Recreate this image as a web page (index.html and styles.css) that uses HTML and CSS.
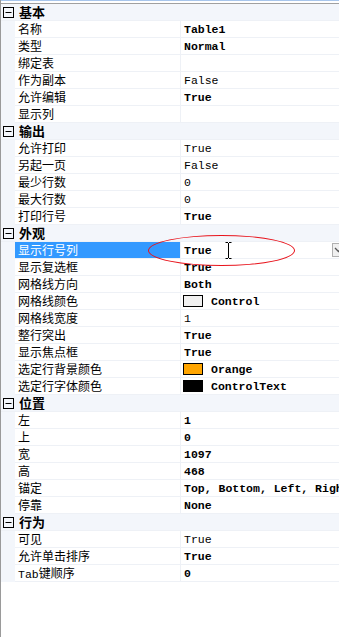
FILE: index.html
```html
<!DOCTYPE html>
<html>
<head>
<meta charset="utf-8">
<link rel="stylesheet" href="styles.css">
</head>
<body>
<div class="frame">
  <div class="topbar"></div>
  <div class="grid">
    <div class="cat"><span class="tog"><svg width="11" height="11" viewBox="0 0 11 11"><rect x="0.5" y="0.5" width="10" height="10" fill="none" stroke="#000"/><path d="M2.5 5.5h6" stroke="#000"/></svg></span><span class="cat-t">基本</span></div>
    <div class="row"><span class="gut"></span><span class="name">名称</span><span class="val b">Table1</span></div>
    <div class="row"><span class="gut"></span><span class="name">类型</span><span class="val b">Normal</span></div>
    <div class="row"><span class="gut"></span><span class="name">绑定表</span><span class="val"></span></div>
    <div class="row"><span class="gut"></span><span class="name">作为副本</span><span class="val">False</span></div>
    <div class="row"><span class="gut"></span><span class="name">允许编辑</span><span class="val b">True</span></div>
    <div class="row"><span class="gut"></span><span class="name">显示列</span><span class="val"></span></div>

    <div class="cat"><span class="tog"><svg width="11" height="11" viewBox="0 0 11 11"><rect x="0.5" y="0.5" width="10" height="10" fill="none" stroke="#000"/><path d="M2.5 5.5h6" stroke="#000"/></svg></span><span class="cat-t">输出</span></div>
    <div class="row"><span class="gut"></span><span class="name">允许打印</span><span class="val">True</span></div>
    <div class="row"><span class="gut"></span><span class="name">另起一页</span><span class="val">False</span></div>
    <div class="row"><span class="gut"></span><span class="name">最少行数</span><span class="val">0</span></div>
    <div class="row"><span class="gut"></span><span class="name">最大行数</span><span class="val">0</span></div>
    <div class="row"><span class="gut"></span><span class="name">打印行号</span><span class="val b">True</span></div>

    <div class="cat"><span class="tog"><svg width="11" height="11" viewBox="0 0 11 11"><rect x="0.5" y="0.5" width="10" height="10" fill="none" stroke="#000"/><path d="M2.5 5.5h6" stroke="#000"/></svg></span><span class="cat-t">外观</span></div>
    <div class="row sel"><span class="gut"></span><span class="name">显示行号列</span><span class="val b">True<span class="drop"><svg width="9" height="6" viewBox="0 0 9 6"><path d="M1 1l3.5 3.5L8 1" fill="none" stroke="#555" stroke-width="1.3"/></svg></span></span></div>
    <div class="row"><span class="gut"></span><span class="name">显示复选框</span><span class="val b">True</span></div>
    <div class="row"><span class="gut"></span><span class="name">网格线方向</span><span class="val b">Both</span></div>
    <div class="row"><span class="gut"></span><span class="name">网格线颜色</span><span class="val b"><span class="sw sw-ctl"></span>Control</span></div>
    <div class="row"><span class="gut"></span><span class="name">网格线宽度</span><span class="val">1</span></div>
    <div class="row"><span class="gut"></span><span class="name">整行突出</span><span class="val b">True</span></div>
    <div class="row"><span class="gut"></span><span class="name">显示焦点框</span><span class="val b">True</span></div>
    <div class="row"><span class="gut"></span><span class="name">选定行背景颜色</span><span class="val b"><span class="sw sw-org"></span>Orange</span></div>
    <div class="row"><span class="gut"></span><span class="name">选定行字体颜色</span><span class="val b"><span class="sw sw-blk"></span>ControlText</span></div>

    <div class="cat"><span class="tog"><svg width="11" height="11" viewBox="0 0 11 11"><rect x="0.5" y="0.5" width="10" height="10" fill="none" stroke="#000"/><path d="M2.5 5.5h6" stroke="#000"/></svg></span><span class="cat-t">位置</span></div>
    <div class="row"><span class="gut"></span><span class="name">左</span><span class="val b">1</span></div>
    <div class="row"><span class="gut"></span><span class="name">上</span><span class="val b">0</span></div>
    <div class="row"><span class="gut"></span><span class="name">宽</span><span class="val b">1097</span></div>
    <div class="row"><span class="gut"></span><span class="name">高</span><span class="val b">468</span></div>
    <div class="row"><span class="gut"></span><span class="name">锚定</span><span class="val b">Top, Bottom, Left, Right</span></div>
    <div class="row"><span class="gut"></span><span class="name">停靠</span><span class="val b">None</span></div>

    <div class="cat"><span class="tog"><svg width="11" height="11" viewBox="0 0 11 11"><rect x="0.5" y="0.5" width="10" height="10" fill="none" stroke="#000"/><path d="M2.5 5.5h6" stroke="#000"/></svg></span><span class="cat-t">行为</span></div>
    <div class="row"><span class="gut"></span><span class="name">可见</span><span class="val">True</span></div>
    <div class="row"><span class="gut"></span><span class="name">允许单击排序</span><span class="val b">True</span></div>
    <div class="row"><span class="gut"></span><span class="name"><span class="mono">Tab</span>键顺序</span><span class="val b">0</span></div>
  </div>
  <div class="ellipse"></div>
  <svg class="ibeam" width="7" height="17" viewBox="0 0 7 17"><path d="M0.5 0.5h2.5M4 0.5h2.5M3.5 1v15M0.5 16.5h2.5M4 16.5h2.5" fill="none" stroke="#000" stroke-width="1"/></svg>
</div>
</body>
</html>
```

FILE: styles.css
```css
html, body {
  margin: 0;
  padding: 0;
  width: 339px;
  height: 637px;
  overflow: hidden;
  background: #fff;
}
.frame {
  position: relative;
  width: 338px;
  height: 637px;
  border-left: 1px solid #9a9a9a;
  overflow: hidden;
  font-family: "Noto Sans CJK SC", "Liberation Sans", sans-serif;
  font-size: 12px;
  color: #000;
}
.topbar {
  height: 2px;
  border-top: 1px solid #a8c6ec;
  border-bottom: 1px solid #a0a0a0;
}
.grid {
  width: 360px;
}
.cat {
  display: flex;
  align-items: center;
  height: 16px;
  border-bottom: 1px solid #eef1f6;
  background: #f3f6fb;
}
.tog {
  display: flex;
  width: 11px;
  height: 11px;
  margin-left: 2px;
}
.cat-t {
  margin-left: 5px;
  font-weight: bold;
  font-size: 13px;
  line-height: 16px;
}
.row {
  display: flex;
  height: 17px;
}
.gut {
  width: 14px;
  flex: none;
  background: #f3f6fb;
}
.name {
  width: 162px;
  flex: none;
  padding-left: 3px;
  line-height: 16px;
  border-bottom: 1px solid #eef1f6;
  border-right: 1px solid #eef1f6;
  white-space: nowrap;
}
.val {
  flex: 1;
  display: flex;
  align-items: center;
  padding-left: 3px;
  border-bottom: 1px solid #eef1f6;
  font-family: "Liberation Mono", monospace;
  font-size: 11.5px;
  white-space: nowrap;
  overflow: hidden;
}
.b {
  font-weight: bold;
}
.mono {
  font-family: "Liberation Mono", monospace;
  font-size: 11.5px;
}
.sel .name {
  background: #3399ff;
  color: #fff;
}
.drop {
  margin-left: auto;
  margin-right: 16px;
  width: 13px;
  height: 14px;
  border: 1px solid #b0b0b0;
  background: #f0f0f0;
  display: flex;
  align-items: center;
  justify-content: center;
  box-sizing: border-box;
}
.sw {
  width: 18px;
  height: 10px;
  border: 1px solid #000;
  margin-right: 8px;
  margin-left: -1px;
  flex: none;
}
.sw-ctl { background: #f0f0f0; }
.sw-org { background: #ffa500; }
.sw-blk { background: #000; }
.ellipse {
  position: absolute;
  left: 147px;
  top: 235px;
  width: 145px;
  height: 29px;
  border: 1px solid #e8141c;
  border-radius: 50%;
}
.ibeam {
  position: absolute;
  left: 224px;
  top: 242px;
}
```
